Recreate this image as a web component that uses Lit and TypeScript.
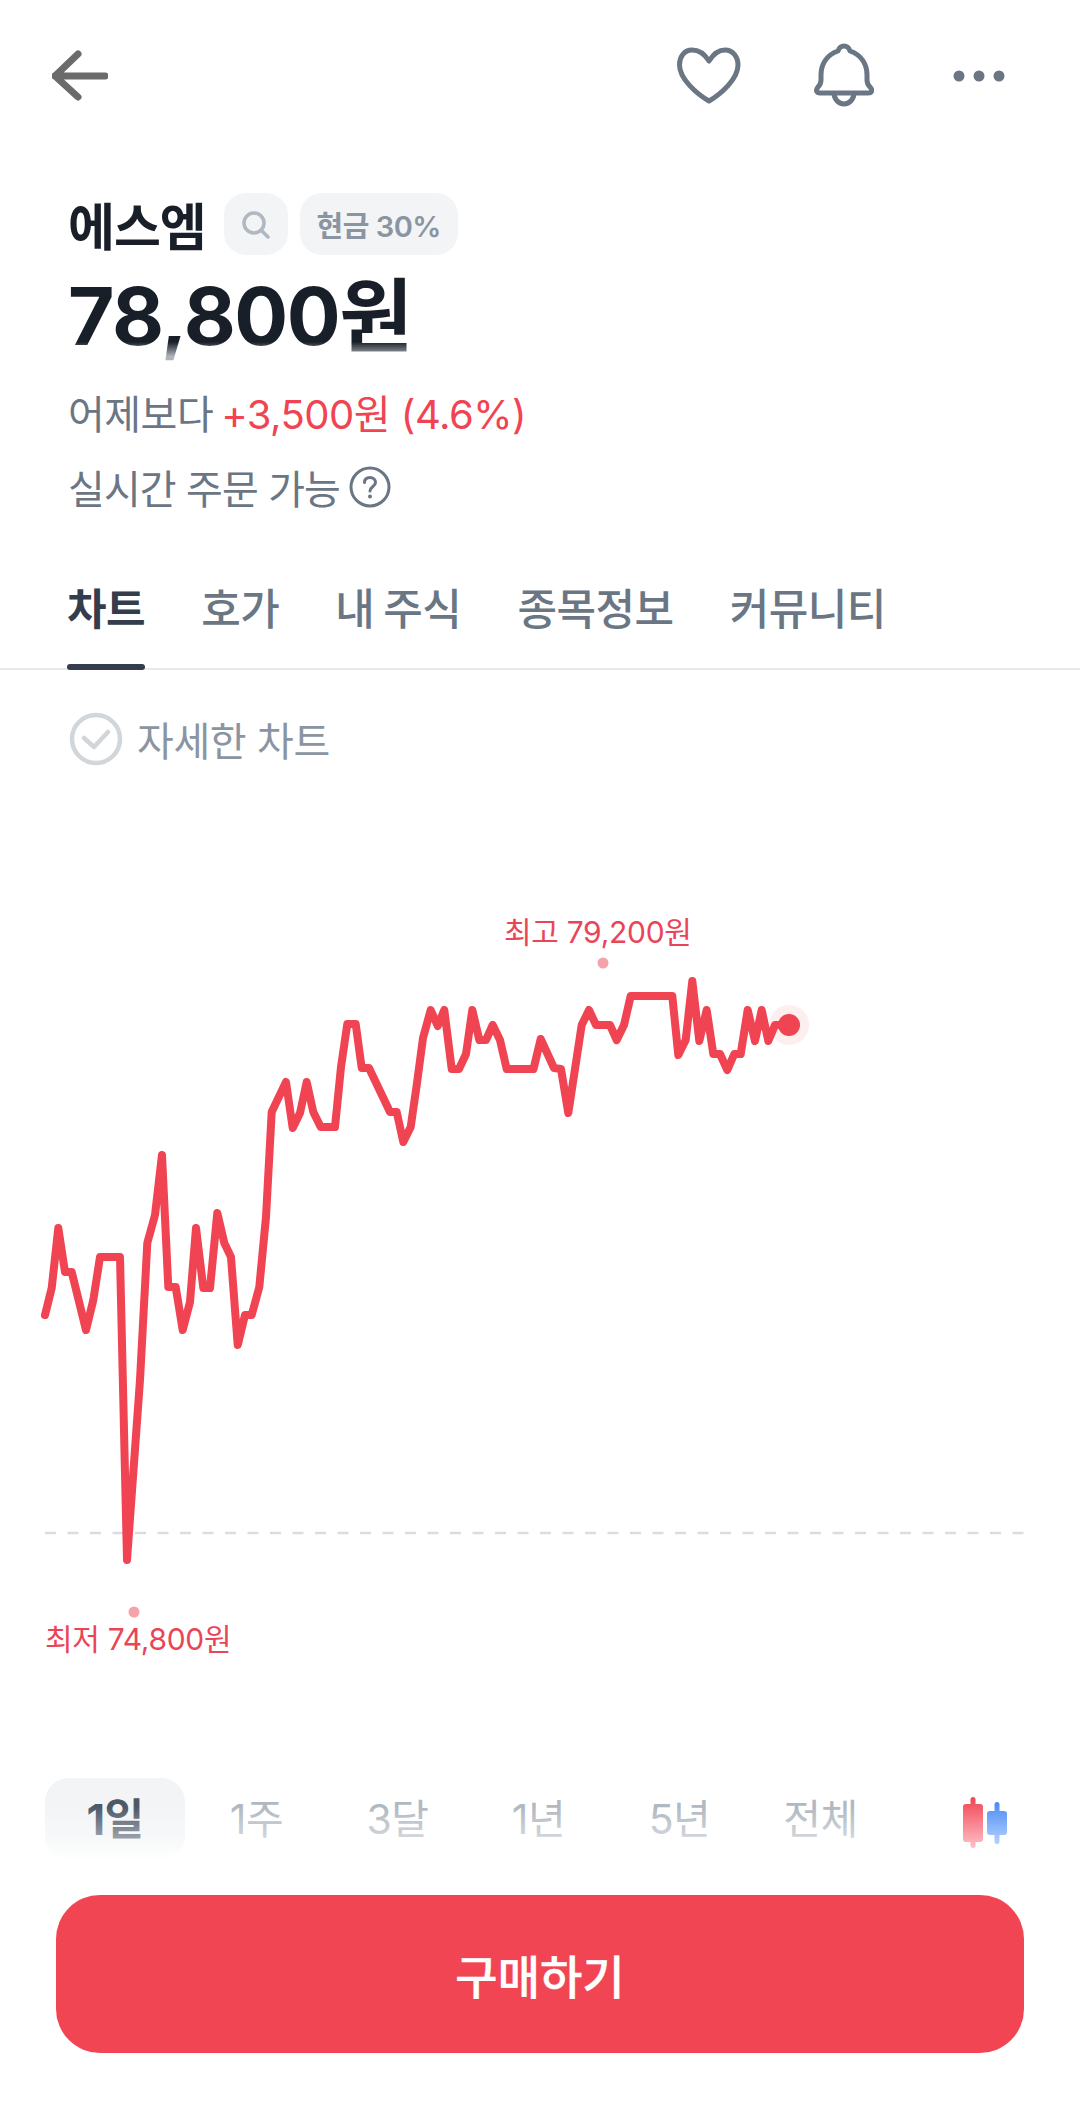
import { css, html, svg, LitElement } from 'lit';
import { customElement } from 'lit/decorators.js';

// chart coordinates are read straight off the page, chart box starts at y=800
const CHART_TOP = 800;
const POINTS: [number, number][] = [
  [45, 1315], [51.7, 1288], [58.3, 1228], [65, 1272], [71.7, 1272], [86, 1330],
  [93.3, 1300], [100, 1257], [120, 1257], [127, 1560], [140, 1380], [147.3, 1243],
  [155, 1215], [162, 1155], [168.3, 1287], [175.7, 1287], [182.7, 1330], [190, 1302],
  [196, 1228], [203.3, 1288], [210, 1288], [217.3, 1213], [224.3, 1243], [231, 1257],
  [237.7, 1345], [245, 1315], [251.7, 1315], [259.3, 1287], [266, 1217], [271.7, 1112],
  [286, 1082], [292.7, 1128], [300, 1113], [306.7, 1082], [313.3, 1112], [320.7, 1127],
  [335, 1127], [341, 1067], [347.3, 1024], [355.7, 1024], [361.7, 1068], [369, 1068],
  [390, 1112], [396.7, 1112], [403.3, 1142], [410.7, 1127], [417, 1083], [423, 1038],
  [430.7, 1010], [437.7, 1026], [444.3, 1010], [451.7, 1069], [459, 1069], [466, 1054],
  [472.3, 1010], [479.3, 1040], [486, 1040], [492.7, 1025], [500, 1040], [506.7, 1069],
  [533.5, 1069], [540.7, 1039], [554, 1068], [561, 1069], [568.3, 1113], [581.7, 1025],
  [589, 1010], [596, 1025], [610, 1025], [616.7, 1040], [624, 1025], [630.7, 996],
  [672.3, 996], [678.3, 1055], [685.7, 1040], [692.3, 981], [699.3, 1041], [706.7, 1010],
  [713.3, 1054], [720, 1054], [727.3, 1070], [734.3, 1054], [740.7, 1054], [747.7, 1010],
  [755, 1041], [761.7, 1010], [768.3, 1041], [775, 1025], [789, 1025],
];

const TABS = ['차트', '호가', '내 주식', '종목정보', '커뮤니티'];
const PERIODS = ['1일', '1주', '3달', '1년', '5년', '전체'];

@customElement('app-root')
export class AppRoot extends LitElement {
  static override styles = css`
    :host {
      display: block;
      width: 1080px;
      height: 2109px;
      background: #fff;
      overflow: hidden;
      font-family: Inter, 'Noto Sans CJK KR', sans-serif;
      color: #191f28;
    }

    .nav {
      display: flex;
      align-items: center;
      height: 152px;
      padding-left: 52px;
    }
    .nav svg {
      display: block;
    }
    .nav-right {
      display: flex;
      align-items: center;
      margin-left: auto;
      margin-right: 75px;
      gap: 73px;
    }
    .more {
      margin-left: 6px;
    }

    .head {
      padding: 41px 0 0 68px;
    }
    .name-row {
      display: flex;
      align-items: center;
      height: 62px;
    }
    .name {
      font-size: 51px;
      font-weight: 700;
      letter-spacing: -1px;
      margin-right: 18px;
    }
    .badge {
      display: flex;
      align-items: center;
      justify-content: center;
      height: 62px;
      border-radius: 22px;
      background: #f2f4f6;
      color: #8b95a1;
      font-size: 29px;
      font-weight: 600;
      letter-spacing: -0.5px;
    }
    .badge.search {
      width: 64px;
      margin-right: 12px;
    }
    .badge.cash {
      width: 158px;
    }
    /* the bottom edge of the price fades out in the reference */
    .price {
      width: fit-content;
      height: 96px;
      margin-top: 13px;
      line-height: 96px;
      font-size: 80px;
      font-weight: 700;
      letter-spacing: -1.5px;
      background: linear-gradient(#191f28 77%, #b0b4ba 92%);
      -webkit-background-clip: text;
      background-clip: text;
      -webkit-text-fill-color: transparent;
    }
    .line {
      display: flex;
      align-items: center;
      height: 60px;
      font-size: 40px;
      color: #6b7684;
      letter-spacing: -0.5px;
    }
    .diff {
      margin-top: 18px;
    }
    .up {
      color: #f04452;
      margin-left: 8px;
    }
    .help {
      margin-left: 9px;
    }
    .realtime {
      margin-top: 15px;
      letter-spacing: -0.9px;
    }

    .tabs {
      display: flex;
      gap: 56px;
      height: 120px;
      margin-top: 31px;
      padding-left: 67px;
      border-bottom: 2px solid #e8eaed;
    }
    .tab {
      position: relative;
      height: 120px;
      padding-top: 1px;
      line-height: 120px;
      font-size: 43px;
      font-weight: 500;
      color: #6b7684;
      letter-spacing: -0.5px;
      word-spacing: -2px;
      box-sizing: border-box;
    }
    .tab.on {
      font-weight: 700;
      color: #333d4b;
    }
    .tab.on::after {
      content: '';
      position: absolute;
      left: 0;
      right: 0;
      bottom: -2px;
      height: 6px;
      border-radius: 3px;
      background: #333d4b;
    }

    .detail {
      display: flex;
      align-items: center;
      gap: 14px;
      height: 60px;
      margin-top: 39px;
      padding-left: 69px;
      font-size: 40px;
      color: #8b95a1;
      letter-spacing: -0.4px;
    }

    .chart {
      position: relative;
      height: 970px;
      margin-top: 31px;
    }
    .chart svg {
      display: block;
    }
    .mark {
      position: absolute;
      font-size: 30px;
      line-height: 36px;
      color: #ea4557;
      white-space: nowrap;
      letter-spacing: -0.3px;
    }
    .mark.high {
      left: 504px;
      top: 114px;
    }
    .mark.low {
      left: 45px;
      top: 821px;
    }

    .periods {
      position: relative;
      display: flex;
      align-items: center;
      height: 82px;
      margin-top: 8px;
      padding-left: 45px;
    }
    .period {
      width: 141px;
      height: 82px;
      line-height: 82px;
      text-align: center;
      font-size: 41px;
      color: #b0b8c1;
      letter-spacing: -0.5px;
    }
    .period.on {
      width: 140px;
      margin-right: 1px;
      border-radius: 24px;
      font-size: 43px;
      font-weight: 700;
      color: #4e5968;
      background: #f2f4f6;
    }
    .candles {
      position: relative;
      z-index: 1;
      display: block;
      margin: 8px 0 0 72px;
    }
    .fade {
      position: absolute;
      left: 0;
      right: 0;
      top: 0;
      height: 82px;
      background: linear-gradient(
        rgba(255, 255, 255, 0) 35%,
        rgba(255, 255, 255, 0.45) 75%,
        #fff 100%
      );
      pointer-events: none;
    }

    .buy {
      display: flex;
      align-items: center;
      justify-content: center;
      width: 968px;
      height: 158px;
      margin: 35px 0 0 56px;
      border-radius: 44px;
      background: #f24554;
      color: #fff;
      font-size: 46px;
      font-weight: 500;
      -webkit-text-stroke: 0.4px #fff;
    }
  `;

  private renderChart() {
    const line = POINTS.map(([x, y]) => `${x},${y - CHART_TOP}`).join(' ');
    const [endX, endY] = POINTS[POINTS.length - 1];
    return svg`
      <line x1="45" x2="1025" y1=${1533 - CHART_TOP} y2=${1533 - CHART_TOP}
        stroke="#d9dde2" stroke-width="2.5" stroke-dasharray="11 11.5"/>
      <circle cx=${endX} cy=${endY - CHART_TOP} r="20" fill="#fdeef0"/>
      <polyline points=${line} fill="none" stroke="#f04452" stroke-width="8"
        stroke-linejoin="round" stroke-linecap="round"/>
      <circle cx=${endX} cy=${endY - CHART_TOP} r="11" fill="#f04452"/>
      <circle cx="603" cy=${963 - CHART_TOP} r="5.5" fill="#f5a3ab"/>
      <circle cx="134" cy=${1612 - CHART_TOP} r="5.5" fill="#f5a3ab"/>
    `;
  }

  override render() {
    return html`
      <div class="nav">
        <svg width="56" height="52" viewBox="0 0 56 52">
          <path d="M3 26H53M26 4L3 26L26 47" fill="none" stroke="#6b6b6b" stroke-width="7"
            stroke-linecap="round" stroke-linejoin="round"/>
        </svg>
        <div class="nav-right">
          <svg width="64" height="58" viewBox="677 48 64 58">
            <path d="M709 62C704 54 697 51 692 51C684 51 679.5 58 679.5 66C679.5 80 697 95 709 102C721 95 738 80 738 66C738 58 733 51 725 51C720 51 714 54 709 62Z"
              fill="none" stroke="#6b7684" stroke-width="5" stroke-linejoin="round"/>
          </svg>
          <svg width="60" height="66" viewBox="814 44 60 66">
            <path d="M844 47C841 47 839 49 838 52C826 56 821 66 821 76L821 81Q821 85 818 88C815 92 817 94 820 94L868 94C872 94 873 91 870 88Q867 85 867 81L867 76C867 66 862 56 850 52C849 49 847 47 844 47ZM834 94A10 11 0 0 0 854 94"
              fill="none" stroke="#6b7684" stroke-width="5" stroke-linejoin="round"/>
          </svg>
          <svg class="more" width="52" height="12" viewBox="953 70 52 12">
            <circle cx="959" cy="76" r="5.5" fill="#6b7684"/>
            <circle cx="979" cy="76" r="5.5" fill="#6b7684"/>
            <circle cx="999" cy="76" r="5.5" fill="#6b7684"/>
          </svg>
        </div>
      </div>

      <div class="head">
        <div class="name-row">
          <span class="name">에스엠</span>
          <span class="badge search">
            <svg width="30" height="30" viewBox="0 0 30 30">
              <circle cx="13" cy="14" r="10" fill="none" stroke="#b0b8c1" stroke-width="3.5"/>
              <path d="M20.5 21.5L27 28" stroke="#b0b8c1" stroke-width="3.5" stroke-linecap="round"/>
            </svg>
          </span>
          <span class="badge cash">현금 30%</span>
        </div>
        <div class="price">78,800원</div>
        <div class="line diff">어제보다<span class="up">+3,500원 (4.6%)</span></div>
        <div class="line realtime">
          실시간 주문 가능
          <svg class="help" width="42" height="42" viewBox="0 0 42 42">
            <circle cx="21" cy="21" r="19" fill="none" stroke="#6b7684" stroke-width="3"/>
            <path d="M15.5 16.5C15.5 13 18 11.5 21 11.5C24 11.5 26.5 13.5 26.5 16.5C26.5 20.5 21 20.5 21 25"
              fill="none" stroke="#6b7684" stroke-width="3" stroke-linecap="round"/>
            <circle cx="21" cy="30.5" r="2" fill="#6b7684"/>
          </svg>
        </div>
      </div>

      <div class="tabs">
        ${TABS.map((t, i) => html`<div class="tab ${i === 0 ? 'on' : ''}">${t}</div>`)}
      </div>

      <div class="detail">
        <svg width="54" height="54" viewBox="0 0 54 54">
          <circle cx="27" cy="27" r="24" fill="none" stroke="#d1d6db" stroke-width="4.5"/>
          <path d="M15 26L25 35L39 20" fill="none" stroke="#d1d6db" stroke-width="4.5"
            stroke-linecap="round" stroke-linejoin="round"/>
        </svg>
        자세한 차트
      </div>

      <div class="chart">
        <svg width="1080" height="970" viewBox="0 0 1080 970">${this.renderChart()}</svg>
        <div class="mark high">최고 79,200원</div>
        <div class="mark low">최저 74,800원</div>
      </div>

      <div class="periods">
        ${PERIODS.map((p, i) => html`<div class="period ${i === 0 ? 'on' : ''}">${p}</div>`)}
        <svg class="candles" width="45" height="52" viewBox="0 0 45 52">
          <defs>
            <linearGradient id="cr" gradientUnits="userSpaceOnUse" x1="0" y1="0" x2="0" y2="51">
              <stop offset="0" stop-color="#f04452"/>
              <stop offset="1" stop-color="#ffc0c8"/>
            </linearGradient>
            <linearGradient id="cb" gradientUnits="userSpaceOnUse" x1="0" y1="5" x2="0" y2="47">
              <stop offset="0" stop-color="#4a8af5"/>
              <stop offset="1" stop-color="#b4d2ff"/>
            </linearGradient>
          </defs>
          <rect x="7.5" y="0" width="5" height="51" rx="2.5" fill="url(#cr)"/>
          <rect x="0" y="7" width="20" height="38" rx="3" fill="url(#cr)"/>
          <rect x="31.5" y="5" width="5" height="42" rx="2.5" fill="url(#cb)"/>
          <rect x="24" y="14" width="20" height="24" rx="3" fill="url(#cb)"/>
        </svg>
        <div class="fade"></div>
      </div>

      <div class="buy">구매하기</div>
    `;
  }
}
